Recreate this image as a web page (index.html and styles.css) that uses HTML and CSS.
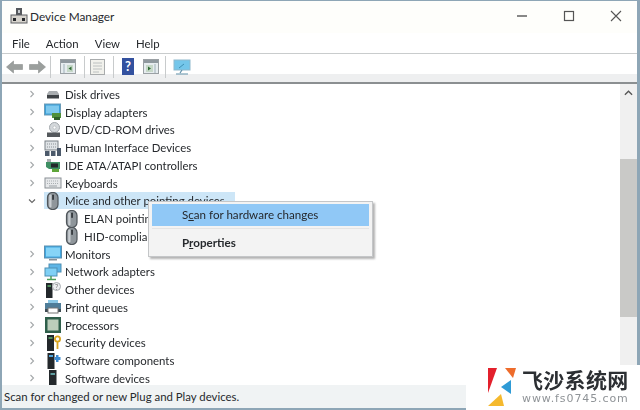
FILE: index.html
```html
<!DOCTYPE html>
<html lang="en">
<head>
  <meta charset="UTF-8" />
  <title>Device Manager</title>
  <link rel="stylesheet" href="styles.css">
</head>
<body>
  <svg class="defs" width="0" height="0">
    <symbol id="mouse" viewBox="0 0 18 18">
      <rect x="3.500" y="0.500" width="10.500" height="17" rx="5" fill="#8f969b" stroke="#50565b" stroke-width="1.200"/>
      <rect x="5.200" y="2.500" width="2.300" height="13" rx="1.100" fill="#c9ced2"/>
      <rect x="8.200" y="2.500" width="1.700" height="5.500" rx=".8" fill="#2f3438"/>
    </symbol>
    <symbol id="monitor" viewBox="0 0 18 18">
      <rect x="0.500" y="1" width="17" height="12" fill="#3fa6e0" stroke="#5b8fb0"/>
      <rect x="2" y="2.500" width="14" height="9" fill="#86d4f7"/>
      <rect x="5" y="14" width="8" height="1.500" fill="#8a9299"/>
    </symbol>
    <symbol id="chev" viewBox="0 0 6 8">
      <path d="M1.500 1l3 3-3 3" fill="none" stroke="#a4a8aa" stroke-width="1.100"/>
    </symbol>
  </svg>

  <div class="window">
    <header class="titlebar">
      <svg class="app-icon" viewBox="0 0 18 18" width="18" height="18">
        <rect x="6" y="1" width="6" height="7" fill="#55585c"/>
        <rect x="8" y="3" width="2" height="3" fill="#c8ccd0"/>
        <rect x="1" y="8" width="16" height="8" fill="#d6d3cc" stroke="#5e6064"/>
        <rect x="3" y="11" width="3" height="3" fill="#26282b"/>
        <rect x="12" y="11" width="3" height="3" fill="#26282b"/>
      </svg>
      <span class="title">Device Manager</span>
      <div class="controls">
        <svg viewBox="0 0 12 12" width="12" height="12"><path d="M1 6h10" stroke="#555" stroke-width="1.400"/></svg>
        <svg viewBox="0 0 12 12" width="12" height="12"><rect x="1.500" y="1.500" width="9" height="9" fill="none" stroke="#555" stroke-width="1.200"/></svg>
        <svg viewBox="0 0 12 12" width="12" height="12"><path d="M1 1l10 10M11 1L1 11" stroke="#555" stroke-width="1.100"/></svg>
      </div>
    </header>

    <nav class="menubar">
      <span>File</span><span>Action</span><span>View</span><span>Help</span>
    </nav>

    <div class="toolbar">
      <svg class="tool back" viewBox="0 0 17 14" width="17" height="14"><path d="M.5 7l7-6v3.500h9v5h-9V13z" fill="#9b9f9d" stroke="#8b8f8f" stroke-width=".6"/></svg>
      <svg class="tool fwd" viewBox="0 0 17 14" width="17" height="14"><path d="M16.500 7l-7-6v3.500h-9v5h9V13z" fill="#9b9f9d" stroke="#8b8f8f" stroke-width=".6"/></svg>
      <i class="sep s1"></i>
      <svg class="tool panel" viewBox="0 0 16 15" width="16" height="15"><rect x=".5" y=".5" width="15" height="14" fill="#e6ecef" stroke="#9aa0a4"/><rect x="1" y="1" width="14" height="3" fill="#8f989e"/><path d="M4 5v9" stroke="#9fb0b8"/><rect x="7" y="6" width="6" height="7" fill="#c6d8c8"/><path d="M11.500 7.500l-3 2 3 2z" fill="#2f6b35"/></svg>
      <i class="sep s2"></i>
      <svg class="tool doc" viewBox="0 0 15 16" width="15" height="16"><rect x=".5" y=".5" width="14" height="15" fill="#f1f1ec" stroke="#a9acad"/><path d="M3 4h9M3 7h9M3 10h9M3 13h6" stroke="#bcc0c0"/></svg>
      <i class="sep s3"></i>
      <svg class="tool help" viewBox="0 0 12 17" width="12" height="17"><rect width="12" height="17" fill="#33519f"/><text x="6" y="13" class="help-mark">?</text></svg>
      <svg class="tool panel2" viewBox="0 0 16 15" width="16" height="15"><rect x=".5" y=".5" width="15" height="14" fill="#e6ecef" stroke="#9aa0a4"/><rect x="1" y="1" width="14" height="3" fill="#8f989e"/><path d="M12 5v9" stroke="#9fb0b8"/><rect x="3" y="6" width="7" height="7" fill="#c6d8c8"/><path d="M5 7.500l3 2-3 2z" fill="#2f6b35"/></svg>
      <i class="sep s4"></i>
      <svg class="tool net" viewBox="0 0 18 16" width="18" height="16"><rect x="1" y="1" width="16" height="10" fill="#74c6ea" stroke="#8fb9cd"/><path d="M9 11l-2 3M3 15h12" stroke="#5e8fa8" stroke-width="1.200"/><path d="M6 9l5-4" stroke="#3d8fb4"/></svg>
    </div>

    <div class="content">
      <ul class="tree">
        <li><svg class="chev"><use href="#chev"/></svg><svg class="ico" viewBox="0 0 18 18"><path d="M3 9l2-3h8l2 3v1H3z" fill="#a9adb0"/><rect x="3" y="10" width="12" height="3.500" fill="#3e4246"/></svg>Disk drives</li>
        <li><svg class="chev"><use href="#chev"/></svg><svg class="ico" viewBox="0 0 18 18"><rect x="0.500" y="1" width="16" height="11" fill="#3b9fd8" stroke="#6b9cb8"/><rect x="2" y="2.500" width="13" height="8" fill="#7fc9ee"/><rect x="8" y="10" width="9" height="5" fill="#4f8f3a"/><rect x="10" y="14" width="6" height="3" fill="#2f5f2a"/></svg>Display adapters</li>
        <li><svg class="chev"><use href="#chev"/></svg><svg class="ico" viewBox="0 0 18 18"><circle cx="10.500" cy="6.500" r="5" fill="#d4d8db" stroke="#a3a8ac"/><circle cx="10.500" cy="6.500" r="1.500" fill="#fff" stroke="#a3a8ac" stroke-width=".5"/><rect x="3" y="11.500" width="13" height="4.500" fill="#54585c"/></svg>DVD/CD-ROM drives</li>
        <li><svg class="chev"><use href="#chev"/></svg><svg class="ico" viewBox="0 0 18 18"><rect x="1" y="2" width="13" height="9" fill="#dfe3e6" stroke="#7b8187"/><path d="M3 5h9M3 8h9" stroke="#8b9196" stroke-dasharray="1 1"/><rect x="1" y="12" width="4.500" height="5" fill="#4c5a6b"/><rect x="7" y="12" width="4.500" height="5" fill="#4c5a6b"/><rect x="13" y="9" width="4" height="8" fill="#4c5a6b"/></svg>Human Interface Devices</li>
        <li><svg class="chev"><use href="#chev"/></svg><svg class="ico" viewBox="0 0 18 18"><path d="M3 3h4v3H3z" fill="#a9adb0"/><path d="M2 6h14v7H5l-3-2z" fill="#3f8f64"/><rect x="7" y="7.500" width="7" height="4" fill="#23282b"/><rect x="8" y="13" width="7" height="3" fill="#5fa63a"/></svg>IDE ATA/ATAPI controllers</li>
        <li><svg class="chev"><use href="#chev"/></svg><svg class="ico" viewBox="0 0 18 18"><rect x="1" y="4" width="16" height="10" fill="#e6e8ea" stroke="#8a9095"/><path d="M3 7h12M3 9.500h12" stroke="#a9aeb2" stroke-dasharray="1 1"/><path d="M5 12h8" stroke="#9ba1a6"/></svg>Keyboards</li>
        <li><svg class="chev down" viewBox="0 0 8 6"><path d="M1 1.500l3 3 3-3" fill="none" stroke="#666" stroke-width="1.100"/></svg><span class="sel"><svg class="ico"><use href="#mouse"/></svg>Mice and other pointing devices</span></li>
        <li class="child"><svg class="ico"><use href="#mouse"/></svg>ELAN pointing device</li>
        <li class="child"><svg class="ico"><use href="#mouse"/></svg>HID-compliant mouse</li>
        <li><svg class="chev"><use href="#chev"/></svg><svg class="ico"><use href="#monitor"/></svg>Monitors</li>
        <li><svg class="chev"><use href="#chev"/></svg><svg class="ico" viewBox="0 0 18 18"><rect x="5" y="1" width="12" height="8" fill="#5db5e6" stroke="#4f8fb4"/><rect x="1" y="5" width="12" height="8" fill="#7fd0f5" stroke="#4f8fb4"/><path d="M7 13v3M3 16.500h9" stroke="#4fa05c" stroke-width="1.500"/></svg>Network adapters</li>
        <li><svg class="chev"><use href="#chev"/></svg><svg class="ico" viewBox="0 0 18 18"><rect x="2" y="2" width="6.500" height="15" fill="#23282b"/><rect x="3.500" y="4" width="3.500" height="2" fill="#4f8f5c"/><circle cx="12.500" cy="5.500" r="4" fill="#eceef0" stroke="#a9adb1"/><text x="12.500" y="8.500" class="other-mark">?</text></svg>Other devices</li>
        <li><svg class="chev"><use href="#chev"/></svg><svg class="ico" viewBox="0 0 18 18"><rect x="4" y="2" width="10" height="4" fill="#8bc8e6"/><rect x="1" y="5" width="16" height="6" fill="#4f7d99"/><path d="M1 11v3h3v-3zM14 11v3h3v-3z" fill="#3f4a52"/><rect x="4" y="10" width="10" height="5" fill="#fff" stroke="#777"/></svg>Print queues</li>
        <li><svg class="chev"><use href="#chev"/></svg><svg class="ico" viewBox="0 0 18 18"><rect x="1" y="1" width="16" height="16" fill="#2f5f4b"/><rect x="3.500" y="3.500" width="11" height="11" fill="#bccdbb"/></svg>Processors</li>
        <li><svg class="chev"><use href="#chev"/></svg><svg class="ico" viewBox="0 0 18 18"><rect x="3" y="1" width="7" height="16" fill="#23282b"/><rect x="4.500" y="3" width="4" height="2" fill="#4f8f5c"/><circle cx="13.500" cy="5" r="2.600" fill="none" stroke="#d9a520" stroke-width="1.800"/><path d="M13.500 7.500V15" stroke="#d9a520" stroke-width="1.800"/></svg>Security devices</li>
        <li><svg class="chev"><use href="#chev"/></svg><svg class="ico" viewBox="0 0 18 18"><rect x="3.500" y="1" width="7" height="16" fill="#23282b"/><rect x="5" y="3" width="4" height="2" fill="#4fa4dc"/><path d="M10.500 5h6v3h-6z" fill="#3d8ad0"/><path d="M12 3h2.500v7H12z" fill="#3d8ad0"/></svg>Software components</li>
        <li><svg class="chev"><use href="#chev"/></svg><svg class="ico" viewBox="0 0 18 18"><rect x="5" y="1" width="7.500" height="16" fill="#23282b"/><rect x="6.500" y="4" width="4.500" height="2" fill="#5f9ea0"/></svg>Software devices</li>
      </ul>
      <div class="scrollbar">
        <span class="arrow">
          <svg viewBox="0 0 10 6" width="9" height="6"><path d="M1 5l4-4 4 4" fill="none" stroke="#555" stroke-width="1.500"/></svg>
        </span>
        <span class="thumb"></span>
      </div>
      <div class="menu">
        <div class="menu-item active">S<u>c</u>an for hardware changes</div>
        <div class="menu-rule"></div>
        <div class="menu-item strong">P<u>r</u>operties</div>
      </div>
    </div>

    <footer class="statusbar">Scan for changed or new Plug and Play devices.</footer>
  </div>

  <div class="watermark">
    <svg viewBox="0 0 28 38" width="28" height="38">
      <path d="M0 0h9L0 25z" fill="#e3202c"/>
      <path d="M17 0h11l-3 10z" fill="#ee6c2b"/>
      <path d="M23 12v14l-10-7z" fill="#2f9bd6"/>
      <path d="M13 26l3 12H0z" fill="#f5b92d"/>
    </svg>
    <div class="brand">
      <strong>飞沙系统网</strong>
      <span>www.fs0745.com</span>
    </div>
  </div>
</body>
</html>
```

FILE: styles.css
```css
* {
  box-sizing: border-box;
}

html, body {
  margin: 0;
  width: 640px;
  height: 410px;
  overflow: hidden;
  background: #fff;
}

body {
  position: relative;
  font-family: Lato, "Open Sans", sans-serif;
  font-size: 11.400px;
  color: #26292d;
}

.defs {
  position: absolute;
}

.window {
  width: 640px;
  height: 410px;
  display: flex;
  flex-direction: column;
  border: solid #8ea6b6;
  border-width: 1px 3px 2px 2px;
  filter: blur(0.3px);
}

.titlebar {
  height: 32px;
  flex: none;
  display: flex;
  align-items: center;
  padding: 0 0 2px 8px;
  background: #fefefb;
}

.app-icon {
  margin-right: 2px;
}

.title {
  font-size: 11.800px;
}

.controls {
  margin-left: auto;
  display: flex;
  gap: 35px;
  margin-right: 15px;
}

.menubar {
  height: 21px;
  flex: none;
  display: flex;
  align-items: center;
  gap: 16px;
  padding-left: 10px;
  border-bottom: 1px solid #c9cccd;
}

.toolbar {
  height: 30px;
  flex: none;
  display: flex;
  align-items: center;
  padding: 0 0 3px 4px;
  background: linear-gradient(#fff 70%, #eeeff0 70%);
  border-bottom: 2px solid #8b8f91;
}

.fwd {
  margin-left: 6px;
}

.sep {
  width: 1px;
  height: 22px;
  background: #c8cbcc;
}

.s1 {
  margin: 0 9px 0 4px;
}

.s2 {
  margin: 0 5px 0 8px;
}

.s3 {
  margin: 0 8px;
}

.panel2 {
  margin-left: 9px;
}

.s4 {
  margin: 0 7px 0 6px;
}

.help-mark {
  font-size: 13px;
  font-weight: 700;
  fill: #fff;
  text-anchor: middle;
}

.other-mark {
  font-size: 7px;
  fill: #777;
  text-anchor: middle;
}

.content {
  position: relative;
  flex: 1;
  min-height: 0;
  display: flex;
}

.tree {
  flex: 1;
  margin: 0;
  padding: 1.500px 0 0 26px;
  list-style: none;
  overflow: hidden;
}

.tree li {
  height: 17.750px;
  display: flex;
  align-items: center;
  white-space: nowrap;
}

.chev {
  width: 6px;
  height: 8px;
  flex: none;
  margin: 0 9px 0 1px;
}

.chev.down {
  width: 8px;
  height: 6px;
  margin: 0 8px 0 0;
}

.ico {
  width: 18px;
  height: 18px;
  flex: none;
  margin-right: 3px;
}

.sel {
  display: flex;
  align-items: center;
  width: 191px;
  height: 17px;
  background: #cde6f7;
}

.tree li.child {
  padding-left: 35px;
}

.scrollbar {
  width: 17px;
  flex: none;
  background: #f0f0f0;
  display: flex;
  flex-direction: column;
}

.arrow {
  height: 17px;
  display: flex;
  align-items: center;
  justify-content: center;
}

.thumb {
  margin-top: 58px;
  height: 158px;
  background: #c9c9c7;
}

.menu {
  position: absolute;
  left: 146px;
  top: 117px;
  width: 225px;
  height: 56px;
  padding: 2px 3px;
  background: #f3f3f3;
  border: 1px solid #c4c6c8;
  box-shadow: 2px 2px 2px rgba(0, 0, 0, 0.3);
}

.menu-item {
  height: 22px;
  line-height: 22px;
  padding-left: 30px;
  font-size: 11.600px;
}

.menu-item.active {
  background: #90c8f6;
}

.menu-item.strong {
  font-weight: 700;
  line-height: 24px;
}

.menu-rule {
  height: 1px;
  margin: 2px 0 2px;
  background: #e4e4e4;
}

.statusbar {
  height: 23px;
  flex: none;
  line-height: 24px;
  padding-left: 2px;
  background: #f0f3f4;
}

.watermark {
  position: absolute;
  right: 0;
  bottom: 0;
  width: 174px;
  height: 45px;
  padding: 3px 0 0 22px;
  display: flex;
  gap: 6px;
  background: #fff;
}

.brand {
  display: flex;
  flex-direction: column;
  margin-top: -2px;
}

.brand strong {
  font-family: "Noto Sans CJK SC", sans-serif;
  font-size: 21px;
  line-height: 26px;
  letter-spacing: 0.300px;
  color: #2c2f33;
}

.brand span {
  font-family: "DejaVu Sans", sans-serif;
  font-size: 11px;
  line-height: 13px;
  letter-spacing: 0.900px;
  color: #8f9397;
}
```
